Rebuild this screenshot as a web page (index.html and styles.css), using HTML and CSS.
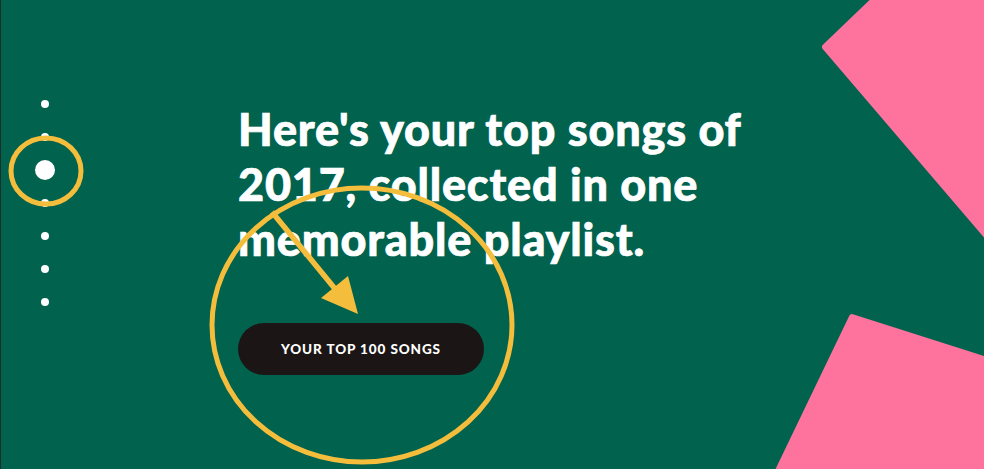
FILE: index.html
```html
<!DOCTYPE html>
<html lang="en">
<head>
<meta charset="utf-8">
<title>Your top songs 2017</title>
<link rel="stylesheet" href="styles.css">
</head>
<body>
<main class="stage">
  <svg class="shapes" width="984" height="469" viewBox="0 0 984 469" aria-hidden="true">
    <polygon class="pink" points="878,-4 825,47 990,240 990,-4"/>
    <polygon class="pink" points="852,317 990,361 990,475 776,475"/>
  </svg>
  <nav class="dots">
    <span class="slot"><i class="dot"></i></span>
    <span class="slot"><i class="dot"></i></span>
    <span class="slot"><i class="dot big"></i></span>
    <span class="slot"><i class="dot"></i></span>
    <span class="slot"><i class="dot"></i></span>
    <span class="slot"><i class="dot"></i></span>
    <span class="slot"><i class="dot"></i></span>
  </nav>
  <section class="content">
    <h1 class="title">Here's your top songs of<br>2017, collected in one<br>memorable playlist.</h1>
    <a class="cta" href="#">YOUR TOP 100 SONGS</a>
  </section>
  <svg class="marks" width="984" height="469" viewBox="0 0 984 469" aria-hidden="true">
    <ellipse class="ring" cx="46" cy="171" rx="35" ry="33"/>
    <ellipse class="ring" cx="362" cy="325" rx="150" ry="137"/>
    <line class="arrow" x1="272" y1="212" x2="336" y2="290"/>
    <polygon class="head" points="358,314 321,298 348,276"/>
  </svg>
</main>
</body>
</html>
```
FILE: styles.css
```css
html, body {
  margin: 0;
  padding: 0;
}
body {
  background: #01624e;
}
.stage {
  position: relative;
  width: 984px;
  height: 469px;
  overflow: hidden;
  background: #01624e;
  border-left: 1px solid #1c2e2a;
  box-sizing: border-box;
  display: flex;
  align-items: flex-start;
  font-family: "Lato", "Liberation Sans", sans-serif;
}
.shapes, .marks {
  position: absolute;
  left: -1px;
  top: 0;
  pointer-events: none;
}
.shapes { z-index: 0; }
.marks { z-index: 2; }
.pink {
  fill: #fe729e;
  stroke: #fe729e;
  stroke-width: 6;
  stroke-linejoin: round;
}
.ring {
  fill: none;
  stroke: #f5bd3c;
  stroke-width: 5;
}
.arrow {
  stroke: #f5bd3c;
  stroke-width: 5.5;
}
.head {
  fill: #f5bd3c;
}
.dots {
  position: relative;
  z-index: 1;
  display: flex;
  flex-direction: column;
  width: 88px;
  margin-top: 87px;
  align-items: center;
}
.slot {
  height: 33px;
  display: flex;
  align-items: center;
  justify-content: center;
}
.dot {
  display: block;
  width: 8px;
  height: 8px;
  border-radius: 50%;
  background: #fff;
}
.dot.big {
  width: 20px;
  height: 20px;
}
.content {
  position: relative;
  z-index: 1;
  margin-left: 149px;
  margin-top: 102px;
  display: flex;
  flex-direction: column;
  align-items: flex-start;
}
.title {
  margin: 0;
  color: #fff;
  font-weight: 900;
  font-size: 45px;
  line-height: 55px;
  letter-spacing: 0.8px;
  -webkit-text-stroke: 0.7px #fff;
}
.cta {
  margin-top: 56px;
  width: 246px;
  height: 52px;
  border-radius: 26px;
  background: #1b1615;
  color: #fff;
  text-decoration: none;
  display: flex;
  align-items: center;
  justify-content: center;
  font-weight: 900;
  font-size: 13.5px;
  letter-spacing: 0.9px;
}
```
